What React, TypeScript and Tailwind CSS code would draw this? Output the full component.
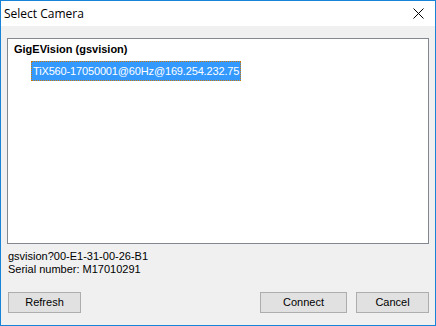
export default function App() {
    return (
        <div className="w-[436px] h-[326px] flex flex-col border border-[#1883d7] bg-[#f0f0f0] font-['Liberation_Sans',Arial,sans-serif] text-[11px] text-black">
            <div className="h-[25px] bg-white flex items-center justify-between pl-[3px] pr-[10px] shrink-0">
                <span className="text-[12px] font-['Open_Sans',sans-serif] text-black">Select Camera</span>
                <svg width="11" height="11" viewBox="0 0 11 11" className="mr-[1px]">
                    <path d="M0.5 0.5 L10.5 10.5 M10.5 0.5 L0.5 10.5" stroke="#000" strokeWidth="1" />
                </svg>
            </div>

            <div className="flex flex-col flex-1 px-[6px] pt-[12px]">
                <div className="h-[206px] bg-white border border-[#828790] px-[6px] pt-[3px]">
                    <div className="font-bold leading-[15px]">GigEVision (gsvision)</div>
                    <div className="mt-[4px] ml-[17px]">
                        <span className="inline-block bg-[#3399ff] text-white leading-[18px] px-[1px] tracking-[-0.15px] border border-dotted border-[#c87800]">
                            TiX560-17050001@60Hz@169.254.232.75
                        </span>
                    </div>
                </div>

                <div className="mt-[6px] ml-[1px] leading-[13px]">
                    <div>gsvision?00-E1-31-00-26-B1</div>
                    <div>Serial number: M17010291</div>
                </div>

                <div className="flex items-center mt-[16px]">
                    <button className="w-[73px] h-[21px] bg-[#e1e1e1] border border-[#adadad] ml-[1px]">Refresh</button>
                    <div className="flex-1" />
                    <button className="w-[87px] h-[21px] bg-[#e1e1e1] border border-[#adadad]">Connect</button>
                    <button className="w-[73px] h-[21px] bg-[#e1e1e1] border border-[#adadad] ml-[9px]">Cancel</button>
                </div>
            </div>
        </div>
    );
}
